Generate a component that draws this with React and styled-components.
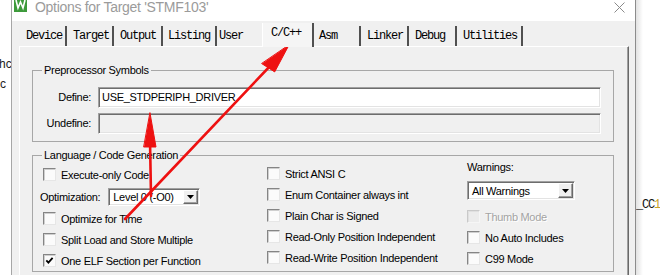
import React from "react";
import styled, { createGlobalStyle } from "styled-components";

const GlobalStyle = createGlobalStyle`
  html, body { margin: 0; padding: 0; background: #fff; }
  body {
    width: 660px; height: 275px; overflow: hidden;
    font-family: "Liberation Sans", Arial, sans-serif;
  }
`;

const Page = styled.div`
  position: relative;
  display: flex;
  width: 660px;
  height: 275px;
  overflow: hidden;
  background: #fff;
`;

const BehindLeft = styled.div`
  width: 11px;
  flex: none;
  box-sizing: border-box;
  overflow: hidden;
  padding-top: 54px;
  font: 12px/20px "Liberation Sans", Arial, sans-serif;
  color: #222;
  white-space: nowrap;
  text-indent: -1px;
`;

const BehindRight = styled.div`
  flex: 1;
  box-sizing: border-box;
  overflow: hidden;
  padding-top: 198px;
  background: linear-gradient(to right, #e2e2e2, #fff 7px);
  font: 12px/14px "Liberation Mono", monospace;
  letter-spacing: -1.2px;
  color: #111;
  white-space: nowrap;
`;

const Yellow = styled.span`
  color: #c9a227;
`;

const Window = styled.div`
  width: 625px;
  flex: none;
  box-sizing: border-box;
  border-left: 1px solid #a6a6a6;
  border-right: 1px solid #8c8c8c;
  display: flex;
  flex-direction: column;
  background: #f0f0f0;
`;

const TitleBar = styled.div`
  height: 21px;
  flex: none;
  background: #fff;
  display: flex;
  align-items: flex-start;
  padding-left: 2px;
  overflow: hidden;
`;

const AppIcon = styled.svg`
  margin-top: -4px;
  flex: none;
`;

const TitleText = styled.span`
  margin-left: 8px;
  margin-top: -2px;
  font: 14px/18px "Liberation Sans", Arial, sans-serif;
  letter-spacing: -0.3px;
  color: #9b9b9b;
  white-space: nowrap;
`;

const CloseIcon = styled.svg`
  margin-left: auto;
  margin-right: 10px;
  margin-top: 2px;
  flex: none;
`;

const Body = styled.div`
  flex: 1;
  padding: 0 6px 0 7px;
  display: flex;
  flex-direction: column;
`;

const TabRow = styled.div`
  height: 25px;
  flex: none;
  display: flex;
  align-items: flex-end;
  padding-left: 3px;
`;

const Tab = styled.div`
  position: relative;
  box-sizing: border-box;
  width: ${(p) => p.$w}px;
  height: ${(p) => (p.$active ? 24 : 20)}px;
  margin-bottom: ${(p) => (p.$active ? -1 : 0)}px;
  z-index: ${(p) => (p.$active ? 1 : 0)};
  padding-left: ${(p) => p.$pad}px;
  padding-bottom: ${(p) => (p.$active ? 4 : 0)}px;
  display: flex;
  align-items: center;
  background: ${(p) => (p.$active ? "#f5f5f5" : "transparent")};
  border-left: 1px solid ${(p) => (p.$active ? "#fff" : "transparent")};
  border-right: ${(p) => (p.$sep ? "2px solid #505050" : "2px solid transparent")};
  font: 12px/14px "Liberation Mono", "Courier New", monospace;
  letter-spacing: -1.2px;
  color: #000;
  white-space: nowrap;
`;

const TabPage = styled.div`
  flex: 1;
  border-top: 1px solid #fff;
  border-left: 1px solid #fff;
  border-right: 1px solid #696969;
  box-shadow: inset -1px 0 0 #a0a0a0;
  padding: 16px 14px 0 12px;
`;

const Group = styled.fieldset`
  margin: ${(p) => p.$top}px 0 0;
  padding: 0;
  min-width: 0;
  border: 1px solid #a7a7a7;
`;

const Legend = styled.legend`
  margin-left: 9px;
  padding: 0 2px;
  font: 11px/14px "Liberation Sans", Arial, sans-serif;
  letter-spacing: -0.3px;
  color: #000;
`;

const SymbolGrid = styled.div`
  display: grid;
  grid-template-columns: 58px 1fr;
  column-gap: 7px;
  row-gap: 5px;
  padding: 10px 12px 7px 0;
`;

const FieldLabel = styled.div`
  text-align: right;
  font: 11px/21px "Liberation Sans", Arial, sans-serif;
  letter-spacing: -0.3px;
  color: #000;
`;

const TextField = styled.div`
  height: 21px;
  box-sizing: border-box;
  border: 1px solid;
  border-color: #a0a0a0 #fff #fff #a0a0a0;
  box-shadow: inset 1px 1px 0 #6d6d6d, inset -1px -1px 0 #e3e3e3;
  background: ${(p) => (p.$disabled ? "#f0f0f0" : "#fff")};
  padding-left: 3px;
  font: 11px/19px "Liberation Sans", Arial, sans-serif;
  letter-spacing: -0.3px;
  color: #000;
  white-space: nowrap;
`;

const CodeGrid = styled.div`
  display: grid;
  grid-template-columns: 227px 200px 1fr;
  padding: 2px 0 0 7px;
`;

const Column = styled.div`
  display: flex;
  flex-direction: column;
  margin-top: ${(p) => p.$shift || 0}px;
`;

const CheckRow = styled.div`
  height: 21px;
  display: flex;
  align-items: center;
  gap: 5px;
  font: 11px/14px "Liberation Sans", Arial, sans-serif;
  letter-spacing: -0.3px;
  color: ${(p) => (p.$disabled ? "#a3a3a3" : "#000")};
  text-shadow: ${(p) => (p.$disabled ? "1px 1px 0 #fff" : "none")};
  white-space: nowrap;
  margin-top: ${(p) => p.$mt || 0}px;
`;

const Box = styled.span`
  width: 13px;
  height: 13px;
  box-sizing: border-box;
  flex: none;
  margin-left: ${(p) => p.$indent || 0}px;
  border: 1px solid;
  border-color: ${(p) =>
    p.$disabled ? "#c9c9c9 #f6f6f6 #f6f6f6 #c9c9c9" : "#858585 #e6e6e6 #e6e6e6 #858585"};
  box-shadow: inset 1px 1px 0 ${(p) => (p.$disabled ? "#e0e0e0" : "#cfcfcf")};
  background: ${(p) => (p.$disabled ? "#ececec" : "#fbfbfb")};
  display: flex;
  align-items: center;
  justify-content: center;
`;

const OptRow = styled.div`
  height: 23px;
  display: flex;
  align-items: center;
  gap: 8px;
`;

const PlainLabel = styled.span`
  font: 11px/14px "Liberation Sans", Arial, sans-serif;
  letter-spacing: -0.3px;
  color: #000;
  white-space: nowrap;
`;

const WarnLabel = styled(PlainLabel)`
  display: block;
  height: 14px;
`;

const Combo = styled.div`
  width: ${(p) => p.$w}px;
  height: ${(p) => p.$h}px;
  margin-top: ${(p) => p.$mt || 0}px;
  box-sizing: border-box;
  display: flex;
  align-items: stretch;
  border: 1px solid;
  border-color: #a0a0a0 #fff #fff #a0a0a0;
  box-shadow: inset 1px 1px 0 #6d6d6d, inset -1px -1px 0 #e3e3e3;
  background: #fff;
  padding: 1px;
`;

const ComboText = styled.span`
  flex: 1;
  padding-left: 3px;
  display: flex;
  align-items: center;
  font: 11px/14px "Liberation Sans", Arial, sans-serif;
  letter-spacing: -0.3px;
  color: #000;
  white-space: nowrap;
  overflow: hidden;
`;

const DropButton = styled.span`
  width: 15px;
  flex: none;
  box-sizing: border-box;
  background: #f0f0f0;
  border: 1px solid;
  border-color: #fff #696969 #696969 #fff;
  box-shadow: inset -1px -1px 0 #a0a0a0;
  display: flex;
  align-items: center;
  justify-content: center;
`;

const Annotation = styled.svg`
  position: absolute;
  left: 0;
  top: 0;
  pointer-events: none;
`;

const tabs = [
  { label: "Device", w: 45, pad: 3, sep: true },
  { label: "Target", w: 47, pad: 5, sep: true },
  { label: "Output", w: 49, pad: 5, sep: true },
  { label: "Listing", w: 54, pad: 4, sep: true },
  { label: "User", w: 45, pad: 1, sep: false },
  { label: "C/C++", w: 52, pad: 8, sep: true, active: true },
  { label: "Asm", w: 47, pad: 4, sep: true },
  { label: "Linker", w: 48, pad: 5, sep: true },
  { label: "Debug", w: 48, pad: 5, sep: true },
  { label: "Utilities", w: 66, pad: 5, sep: true },
];

function Check({ label, checked, disabled, indent, mt }) {
  return (
    <CheckRow $disabled={disabled} $mt={mt}>
      <Box $disabled={disabled} $indent={indent}>
        {checked && (
          <svg width="9" height="9" viewBox="0 0 9 9">
            <polyline points="1.3,4.3 3.4,6.6 7.6,1.8" fill="none" stroke="#000" strokeWidth="1.8" />
          </svg>
        )}
      </Box>
      <span>{label}</span>
    </CheckRow>
  );
}

function Select({ value, w, h, mt }) {
  return (
    <Combo $w={w} $h={h} $mt={mt}>
      <ComboText>{value}</ComboText>
      <DropButton>
        <svg width="7" height="4" viewBox="0 0 7 4">
          <polygon points="0,0 7,0 3.5,4" fill="#000" />
        </svg>
      </DropButton>
    </Combo>
  );
}

export default function App() {
  return (
    <>
      <GlobalStyle />
      <Page>
        <BehindLeft>
          hc
          <br />c
        </BehindLeft>
        <Window>
          <TitleBar>
            <AppIcon width="13" height="16" viewBox="0 0 13 16">
              <rect x="0" y="0" width="13" height="16" fill="#3d9a3b" />
              <polyline points="2,4 4,12 6.5,6 9,12 11,4" fill="none" stroke="#fff" strokeWidth="1.6" />
            </AppIcon>
            <TitleText>Options for Target 'STMF103'</TitleText>
            <CloseIcon width="11" height="11" viewBox="0 0 11 11">
              <path d="M0.5 0.5 L10.5 10.5 M10.5 0.5 L0.5 10.5" stroke="#8a8a8a" strokeWidth="1" />
            </CloseIcon>
          </TitleBar>
          <Body>
            <TabRow>
              {tabs.map((t) => (
                <Tab key={t.label} $w={t.w} $pad={t.pad} $sep={t.sep} $active={t.active}>
                  {t.label}
                </Tab>
              ))}
            </TabRow>
            <TabPage>
              <Group $top={0}>
                <Legend>Preprocessor Symbols</Legend>
                <SymbolGrid>
                  <FieldLabel>Define:</FieldLabel>
                  <TextField>USE_STDPERIPH_DRIVER</TextField>
                  <FieldLabel>Undefine:</FieldLabel>
                  <TextField $disabled />
                </SymbolGrid>
              </Group>
              <Group $top={6}>
                <Legend>Language / Code Generation</Legend>
                <CodeGrid>
                  <Column>
                    <Check label="Execute-only Code" indent={3} />
                    <OptRow>
                      <PlainLabel>Optimization:</PlainLabel>
                      <Select value="Level 0 (-O0)" w={92} h={18} />
                    </OptRow>
                    <Check label="Optimize for Time" indent={3} />
                    <Check label="Split Load and Store Multiple" indent={3} />
                    <Check label="One ELF Section per Function" indent={3} checked />
                  </Column>
                  <Column $shift={-1}>
                    <Check label="Strict ANSI C" />
                    <Check label="Enum Container always int" />
                    <Check label="Plain Char is Signed" />
                    <Check label="Read-Only Position Independent" />
                    <Check label="Read-Write Position Independent" />
                  </Column>
                  <Column $shift={-4}>
                    <WarnLabel>Warnings:</WarnLabel>
                    <Select value="All Warnings" w={108} h={19} mt={7} />
                    <Check label="Thumb Mode" disabled mt={6} />
                    <Check label="No Auto Includes" />
                    <Check label="C99 Mode" />
                  </Column>
                </CodeGrid>
              </Group>
            </TabPage>
          </Body>
        </Window>
        <BehindRight>
          _CC<Yellow>1</Yellow>
        </BehindRight>
        <Annotation width="660" height="275" viewBox="0 0 660 275">
          <g fill="#ee1111" stroke="#ee1111" strokeLinecap="round">
            <line x1="125" y1="219" x2="272" y2="64" strokeWidth="2.6" />
            <polygon points="289,45 274.7,71.9 261.9,63.7" strokeWidth="1" />
            <line x1="151" y1="196" x2="150" y2="140" strokeWidth="2.6" />
            <polygon points="150,113 156,147 144,147" strokeWidth="1" />
          </g>
        </Annotation>
      </Page>
    </>
  );
}
